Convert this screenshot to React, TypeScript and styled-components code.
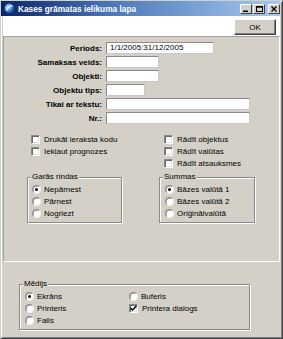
import React from 'react';
import styled, { createGlobalStyle } from 'styled-components';

const GlobalStyle = createGlobalStyle`
  html, body {
    margin: 0;
    padding: 0;
    background: #d4d0c8;
  }
  body {
    font-family: "Liberation Sans", Arial, sans-serif;
    font-size: 8px;
    color: #000;
  }
  * {
    box-sizing: border-box;
  }
`;

const Window = styled.div`
  width: 283px;
  height: 339px;
  display: flex;
  flex-direction: column;
  background: #d4d0c8;
  border: 1px solid;
  border-color: #d4d0c8 #404040 #404040 #d4d0c8;
  box-shadow: inset 1px 1px 0 #fff, inset -1px -1px 0 #808080;
  padding: 0 2px 2px 0;
`;

const TitleBar = styled.div`
  height: 15px;
  flex-shrink: 0;
  display: flex;
  align-items: center;
  gap: 3px;
  padding: 0 0 0 3px;
  background: linear-gradient(90deg, #0a246a 0%, #4b78b8 40%, #a6caf0 100%);
`;

const TitleText = styled.span`
  color: #fff;
  font-weight: bold;
  font-size: 8.3px;
  white-space: nowrap;
`;

const TitleButtons = styled.div`
  margin-left: auto;
  display: flex;
  gap: 1px;
`;

const CaptionButton = styled.div<{ $gap?: boolean }>`
  width: 12px;
  height: 10px;
  margin-left: ${(p) => (p.$gap ? '2px' : '0')};
  background: #d4d0c8;
  border: 1px solid;
  border-color: #fff #404040 #404040 #fff;
  display: flex;
  align-items: center;
  justify-content: center;
`;

const Toolbar = styled.div`
  height: 20px;
  flex-shrink: 0;
  margin-left: 2px;
  background: #fff;
  display: flex;
  justify-content: flex-end;
  align-items: flex-start;
  padding: 3px 4px 0 0;
`;

const PushButton = styled.div`
  width: 42px;
  height: 16px;
  background: #d4d0c8;
  border: 1px solid;
  border-color: #fff #404040 #404040 #fff;
  box-shadow: inset -1px -1px 0 #808080;
  display: flex;
  align-items: center;
  justify-content: center;
  font-size: 8px;
`;

const TopPanel = styled.div`
  height: 226px;
  flex-shrink: 0;
  margin-left: 2px;
  border: 1px solid;
  border-color: #a0a0a0 #fff #fff #a0a0a0;
  display: flex;
  flex-direction: column;
  padding-top: 5px;
`;

const Fields = styled.div`
  display: grid;
  grid-template-columns: 98px max-content;
  column-gap: 4px;
  row-gap: 2px;
  align-items: center;
`;

const FieldLabel = styled.label`
  text-align: right;
  font-weight: bold;
  font-size: 8px;
  white-space: nowrap;
`;

const TextBox = styled.div<{ $w: number }>`
  width: ${(p) => p.$w}px;
  height: 12px;
  background: #fff;
  border: 1px solid;
  border-color: #8a8a8a #c8c8c8 #c8c8c8 #8a8a8a;
  padding-left: 3px;
  font-size: 8px;
  line-height: 10px;
  white-space: nowrap;
`;

const Checks = styled.div`
  display: flex;
  margin-top: 9px;
  padding-left: 27px;
`;

const CheckColumn = styled.div<{ $w?: number }>`
  width: ${(p) => (p.$w ? `${p.$w}px` : 'auto')};
  display: flex;
  flex-direction: column;
`;

const OptionRow = styled.div<{ $gap?: number }>`
  height: 12px;
  display: flex;
  align-items: center;
  gap: ${(p) => p.$gap ?? 4}px;
  white-space: nowrap;
  font-size: 8px;
`;

const Box = styled.div`
  width: 9px;
  height: 9px;
  flex-shrink: 0;
  background: #fff;
  border: 1px solid;
  border-color: #8a8a8a #fff #fff #8a8a8a;
  box-shadow: inset 1px 1px 0 #6a6a6a, inset -1px -1px 0 #e4e2dc;
  display: flex;
  align-items: center;
  justify-content: center;
`;

const RadioCircle = styled.div`
  width: 9px;
  height: 9px;
  flex-shrink: 0;
  border-radius: 50%;
  background: #fff;
  border: 1px solid;
  border-color: #8a8a8a #f0f0f0 #f0f0f0 #8a8a8a;
  box-shadow: inset 0.5px 0.5px 0 #707070;
  display: flex;
  align-items: center;
  justify-content: center;
`;

const Dot = styled.div`
  width: 3px;
  height: 3px;
  border-radius: 50%;
  background: #000;
`;

const Groups = styled.div`
  display: flex;
  gap: 37px;
  margin-top: 8px;
  padding-left: 23px;
`;

const Group = styled.div<{ $w: number; $pad: number }>`
  position: relative;
  width: ${(p) => p.$w}px;
  height: 46px;
  border: 1px solid #8a8a8a;
  box-shadow: inset 1px 1px 0 #fff, 1px 1px 0 #fff;
  padding: 5px 0 0 ${(p) => p.$pad}px;
`;

const Legend = styled.span`
  position: absolute;
  top: -6px;
  left: 3px;
  padding: 0 1px;
  background: #d4d0c8;
  line-height: 10px;
  font-size: 8px;
`;

const BottomArea = styled.div`
  flex: 1;
  padding: 22px 0 0 18px;
`;

const MediaGrid = styled.div`
  display: grid;
  grid-template-columns: 104px auto;
`;

const Check = ({ checked, label }: { checked?: boolean; label: string }) => (
  <OptionRow>
    <Box>
      {checked && (
        <svg width="7" height="7" viewBox="0 0 7 7">
          <path d="M0.5 3 L2.5 5 L6.5 1" stroke="#000" strokeWidth="1.5" fill="none" />
        </svg>
      )}
    </Box>
    {label}
  </OptionRow>
);

const Radio = ({ checked, label }: { checked?: boolean; label: string }) => (
  <OptionRow $gap={3}>
    <RadioCircle>{checked && <Dot />}</RadioCircle>
    {label}
  </OptionRow>
);

const fields = [
  { label: 'Periods:', w: 108, value: '1/1/2005:31/12/2005' },
  { label: 'Samaksas veids:', w: 53 },
  { label: 'Objekti:', w: 53 },
  { label: 'Objektu tips:', w: 39 },
  { label: 'Tikai ar tekstu:', w: 144 },
  { label: 'Nr.:', w: 144 },
];

export default function App() {
  return (
    <>
      <GlobalStyle />
      <Window>
        <TitleBar>
          <svg width="11" height="11" viewBox="0 0 11 11">
            <defs>
              <radialGradient id="ic" cx="35%" cy="35%" r="70%">
                <stop offset="0%" stopColor="#cfe6ff" />
                <stop offset="60%" stopColor="#3c7fd0" />
                <stop offset="100%" stopColor="#0b3a86" />
              </radialGradient>
            </defs>
            <circle cx="5.5" cy="5.5" r="5" fill="url(#ic)" />
            <path d="M2.5 7.5 Q5 2 8.5 3" stroke="#fff" strokeWidth="1.2" fill="none" />
          </svg>
          <TitleText>Kases grāmatas ielikuma lapa</TitleText>
          <TitleButtons>
            <CaptionButton>
              <svg width="6" height="6" viewBox="0 0 6 6">
                <rect x="0" y="4.5" width="5" height="1.5" fill="#000" />
              </svg>
            </CaptionButton>
            <CaptionButton>
              <svg width="7" height="6" viewBox="0 0 7 6">
                <rect x="0.5" y="0.5" width="6" height="5" stroke="#000" fill="none" />
                <rect x="0.5" y="0.5" width="6" height="1.2" fill="#000" />
              </svg>
            </CaptionButton>
            <CaptionButton $gap>
              <svg width="6" height="6" viewBox="0 0 6 6">
                <path d="M0.5 0.5 L5.5 5.5 M5.5 0.5 L0.5 5.5" stroke="#000" strokeWidth="1.3" />
              </svg>
            </CaptionButton>
          </TitleButtons>
        </TitleBar>

        <Toolbar>
          <PushButton>OK</PushButton>
        </Toolbar>

        <TopPanel>
          <Fields>
            {fields.map((f) => (
              <React.Fragment key={f.label}>
                <FieldLabel>{f.label}</FieldLabel>
                <TextBox $w={f.w}>{f.value}</TextBox>
              </React.Fragment>
            ))}
          </Fields>

          <Checks>
            <CheckColumn $w={133}>
              <Check label="Drukāt ieraksta kodu" />
              <Check label="Iekļaut prognozes" />
            </CheckColumn>
            <CheckColumn>
              <Check label="Rādīt objektus" />
              <Check label="Rādīt valūtas" />
              <Check label="Rādīt atsauksmes" />
            </CheckColumn>
          </Checks>

          <Groups>
            <Group $w={95} $pad={4}>
              <Legend>Garās rindas</Legend>
              <Radio checked label="Nepārnest" />
              <Radio label="Pārnest" />
              <Radio label="Nogriezt" />
            </Group>
            <Group $w={96} $pad={5}>
              <Legend>Summas</Legend>
              <Radio checked label="Bāzes valūtā 1" />
              <Radio label="Bāzes valūtā 2" />
              <Radio label="Oriģinālvalūtā" />
            </Group>
          </Groups>
        </TopPanel>

        <BottomArea>
          <Group $w={231} $pad={5}>
            <Legend>Mēdijs</Legend>
            <MediaGrid>
              <CheckColumn>
                <Radio checked label="Ekrāns" />
                <Radio label="Printeris" />
                <Radio label="Fails" />
              </CheckColumn>
              <CheckColumn>
                <Radio label="Buferis" />
                <Check checked label="Printera dialogs" />
              </CheckColumn>
            </MediaGrid>
          </Group>
        </BottomArea>
      </Window>
    </>
  );
}
